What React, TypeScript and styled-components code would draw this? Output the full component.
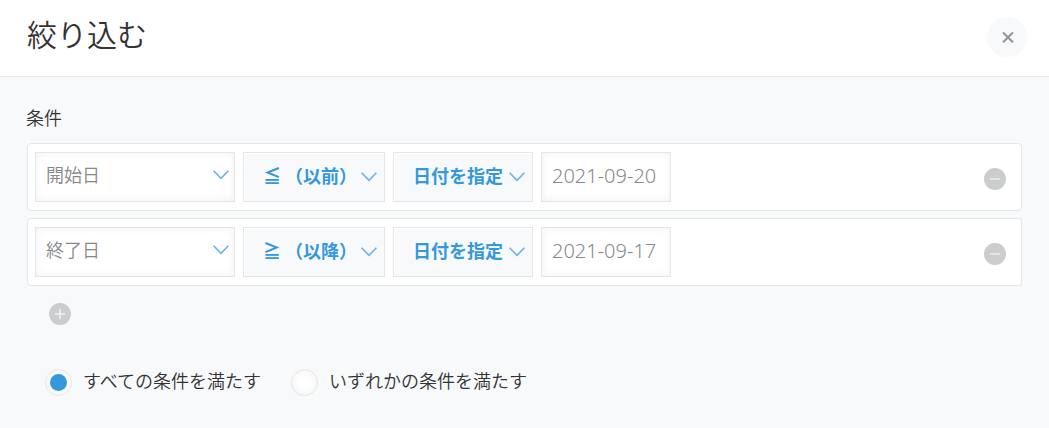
import { useState } from "react";
import styled, { createGlobalStyle } from "styled-components";

const GlobalStyle = createGlobalStyle`
  *, *::before, *::after { box-sizing: border-box; }
  html { background: #f7f9fb; }
  body { margin: 0; }
  body, button, input, select {
    font-family: "Noto Sans CJK JP", "Noto Sans", sans-serif;
    font-size: 18px;
    font-weight: 350;
    color: #333;
  }
`;

const Header = styled.header`
  display: flex;
  align-items: center;
  justify-content: space-between;
  padding: 10px 22px 12px 27px;
  background: #fff;
  border-bottom: 1px solid #e3e7e8;
`;

const Title = styled.h1`
  margin: 0;
  padding-bottom: 8px;
  font-size: 30px;
  line-height: 46px;
  font-weight: 350;
`;

const CloseButton = styled.button`
  display: grid;
  place-items: center;
  width: 40px;
  height: 40px;
  padding: 0;
  border: 0;
  border-radius: 50%;
  background: #f7f9fa;
  cursor: pointer;
`;

const Content = styled.main`
  padding: 27px 27px 32px 26px;
`;

const SectionTitle = styled.h2`
  margin: 0 0 13px;
  font-size: 18px;
  line-height: 26px;
  font-weight: 350;
`;

const ConditionList = styled.div`
  display: flex;
  flex-direction: column;
  gap: 7px;
  margin-left: 1px;
`;

const ConditionRow = styled.div`
  display: flex;
  align-items: center;
  gap: 8px;
  padding: 8px 15px 8px 7px;
  background: #fff;
  border: 1px solid #e3e7e8;
  border-radius: 4px;
`;

const SelectBox = styled.div<{ $width: number; $accent?: boolean }>`
  display: grid;
  grid-template-columns: 1fr auto;
  align-items: center;
  width: ${(p) => p.$width}px;
  height: 50px;

  select {
    grid-area: 1 / 1 / 2 / 3;
    appearance: none;
    width: 100%;
    height: 50px;
    margin: 0;
    padding: ${(p) => (p.$accent ? "0 24px 4px 19px" : "0 28px 6px 10px")};
    border: 1px solid #e3e7e8;
    border-radius: 0;
    background: ${(p) => (p.$accent ? "#f7f9fa" : "#fff")};
    box-shadow: ${(p) =>
      p.$accent ? "inset 1px 1px 0 #fff" : "inset 0 0 8px #f1f1f1"};
    color: ${(p) => (p.$accent ? "#3498db" : "#888")};
    font-weight: ${(p) => (p.$accent ? 700 : 350)};
    cursor: pointer;
  }

  svg {
    grid-area: 1 / 2 / 2 / 3;
    margin-right: ${(p) => (p.$accent ? 8 : 6)}px;
    margin-bottom: ${(p) => (p.$accent ? 0 : 4)}px;
    pointer-events: none;
  }
`;

const DateInput = styled.input`
  width: 130px;
  height: 50px;
  padding: 0 8px 4px 10px;
  border: 1px solid #e3e7e8;
  border-radius: 0;
  background: #fff;
  box-shadow: inset 0 0 8px #f1f1f1;
  color: #888;
  font-family: "Noto Sans", sans-serif;
  font-size: 20px;
  font-weight: 300;
`;

const RoundButton = styled.button<{ $atEnd?: boolean }>`
  display: block;
  width: 22px;
  height: 22px;
  padding: 0;
  border: 0;
  border-radius: 50%;
  background: #cbcccd;
  cursor: pointer;
  margin: ${(p) => (p.$atEnd ? "4px 0 0 auto" : "17px 0 0 23px")};

  svg {
    display: block;
  }
`;

const MatchOptions = styled.div`
  display: flex;
  gap: 30px;
  margin: 41px 0 0 19px;
`;

const RadioLabel = styled.label`
  display: flex;
  align-items: center;
  gap: 11px;
  line-height: 28px;
  cursor: pointer;

  span {
    padding-bottom: 4px;
  }
`;

const Radio = styled.input`
  appearance: none;
  display: grid;
  place-items: center;
  flex: none;
  width: 27px;
  height: 27px;
  margin: 0;
  border: 1px solid #e3e7e8;
  border-radius: 50%;
  background: #fff;
  box-shadow: inset 0 0 8px #f1f1f1;

  &:checked::before {
    content: "";
    width: 17px;
    height: 17px;
    border-radius: 50%;
    background: #3498db;
  }
`;

const Chevron = () => (
  <svg width="16" height="10" viewBox="0 0 16 10" fill="none" stroke="#6ab4e6" strokeWidth="1.6" aria-hidden="true">
    <path d="M0.6 0.8 L8 8.4 L15.4 0.8" />
  </svg>
);

type SelectProps = { label: string; value: string; width: number; accent?: boolean };

const Select = ({ label, value, width, accent }: SelectProps) => (
  <SelectBox $width={width} $accent={accent}>
    <select aria-label={label} defaultValue={value}>
      <option>{value}</option>
    </select>
    <Chevron />
  </SelectBox>
);

const conditions = [
  { field: "開始日", operator: "≦ （以前）", date: "2021-09-20" },
  { field: "終了日", operator: "≧ （以降）", date: "2021-09-17" },
];

const matchModes = ["すべての条件を満たす", "いずれかの条件を満たす"];

export default function App() {
  const [mode, setMode] = useState(matchModes[0]);

  return (
    <>
      <GlobalStyle />
      <Header>
        <Title>絞り込む</Title>
        <CloseButton type="button" aria-label="閉じる">
          <svg width="14" height="14" viewBox="0 0 14 14" stroke="#959595" strokeWidth="2" strokeLinecap="round">
            <path d="M3.6 3 L12.4 11.8 M12.4 3 L3.6 11.8" />
          </svg>
        </CloseButton>
      </Header>
      <Content>
        <SectionTitle>条件</SectionTitle>
        <ConditionList>
          {conditions.map((c) => (
            <ConditionRow key={c.field}>
              <Select label="フィールド" value={c.field} width={200} />
              <Select label="演算子" value={c.operator} width={142} accent />
              <Select label="値の種類" value="日付を指定" width={140} accent />
              <DateInput type="text" aria-label="日付" defaultValue={c.date} />
              <RoundButton type="button" $atEnd aria-label="条件を削除">
                <svg width="22" height="22" viewBox="0 0 22 22" stroke="#ececec" strokeWidth="1.6" strokeLinecap="round">
                  <path d="M6.5 11 H15.5" />
                </svg>
              </RoundButton>
            </ConditionRow>
          ))}
        </ConditionList>
        <RoundButton type="button" aria-label="条件を追加">
          <svg width="22" height="22" viewBox="0 0 22 22" stroke="#f2f2f2" strokeWidth="1.6" strokeLinecap="round">
            <path d="M6.5 11 H15.5 M11 6.5 V15.5" />
          </svg>
        </RoundButton>
        <MatchOptions role="radiogroup" aria-label="条件の組み合わせ">
          {matchModes.map((m) => (
            <RadioLabel key={m}>
              <Radio type="radio" name="match" checked={mode === m} onChange={() => setMode(m)} />
              <span>{m}</span>
            </RadioLabel>
          ))}
        </MatchOptions>
      </Content>
    </>
  );
}
